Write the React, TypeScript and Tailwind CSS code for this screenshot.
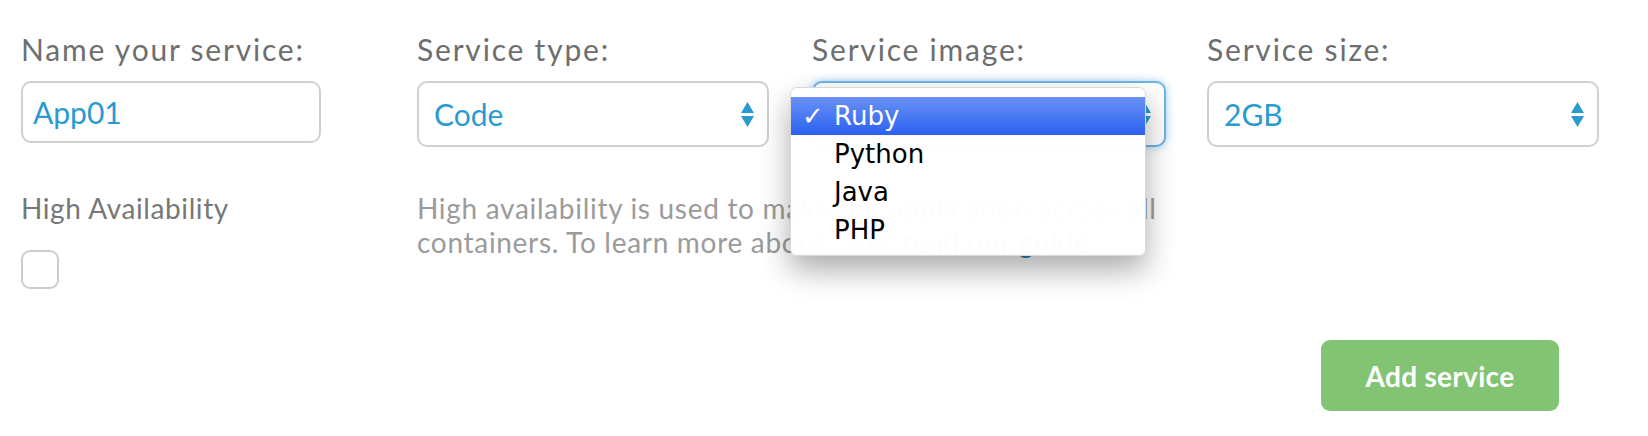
import React from "react";

const Arrows = () => (
  <svg width="13" height="25" viewBox="0 0 13 25" className="shrink-0">
    <polygon points="6.5,0 13,11 0,11" fill="#2a9bd1" />
    <polygon points="0,14 13,14 6.5,25" fill="#2a9bd1" />
  </svg>
);

const Label = ({ children }: { children: React.ReactNode }) => (
  <div className="text-[30px] leading-[36px] tracking-[1.8px] text-[#6e6e6e]">{children}</div>
);

const Select = ({ value, width, focus }: { value: string; width: string; focus?: boolean }) => (
  <div
    className={`mt-[14px] h-[66px] flex items-center justify-between pl-[15px] pr-[13px] rounded-[10px] bg-white ${width} ${
      focus
        ? "border-2 border-[#6db4ea] shadow-[0_0_8px_rgba(90,165,230,0.55)]"
        : "border-2 border-[#d0d0d0]"
    }`}
  >
    <span className="text-[30px] leading-[36px] text-[#2a9bd1]">{value}</span>
    <Arrows />
  </div>
);

export default function App() {
  const items = ["Ruby", "Python", "Java", "PHP"];
  return (
    <div
      className="w-[1648px] h-[436px] bg-white overflow-hidden"
      style={{ fontFamily: "Lato, 'Open Sans', sans-serif" }}
    >
      <div className="flex items-start pl-[21px] pt-[31px]">
        <div className="w-[396px]">
          <Label>Name your service:</Label>
          <div className="mt-[14px] w-[300px] h-[62px] flex items-center pl-[10px] rounded-[10px] border-2 border-[#d0d0d0]">
            <span className="text-[30px] leading-[36px] text-[#2a9bd1]">App01</span>
          </div>
        </div>
        <div className="w-[395px]">
          <Label>Service type:</Label>
          <Select value="Code" width="w-[352px]" />
        </div>
        <div className="w-[395px] relative">
          <Label>Service image:</Label>
          <Select value="Ruby" width="w-[354px]" focus />
          <div
            className="absolute z-10 left-[-22px] top-[56px] w-[356px] h-[169px] pt-[9px] rounded-[7px] bg-white/[0.975] border border-[#d8d8d8] shadow-[0_14px_30px_rgba(0,0,0,0.33)]"
            style={{ fontFamily: "'DejaVu Sans', Verdana, sans-serif" }}
          >
            {items.map((it, i) => (
              <div
                key={it}
                className={`flex h-[38px] items-center text-[26px] leading-[38px] ${
                  i === 0
                    ? "bg-gradient-to-b from-[#6a90f5] to-[#2a60f0] text-white"
                    : "text-black"
                }`}
              >
                <span className="w-[43px] pl-[11px]">{i === 0 ? "✓" : ""}</span>
                <span>{it}</span>
              </div>
            ))}
          </div>
        </div>
        <div>
          <Label>Service size:</Label>
          <Select value="2GB" width="w-[392px]" />
        </div>
      </div>

      <div className="flex items-start pl-[21px] mt-[44px]">
        <div className="w-[396px]">
          <div className="text-[28px] leading-[34px] tracking-[0.6px] text-[#777777]">High Availability</div>
          <div className="mt-[25px] w-[38px] h-[39px] rounded-[9px] border-2 border-[#cdcdcd]" />
        </div>
        <div className="text-[28px] leading-[34px] tracking-[0.7px] text-[#9b9b9b]">
          High availability is used to make the application across all
          <br />
          containers. To learn more about “HA” <span className="text-[#2a80b0]">read our guide.</span>
        </div>
      </div>

      <div className="flex justify-end pr-[89px] mt-[51px]">
        <button className="w-[238px] h-[71px] rounded-[9px] bg-[#82c473] text-white text-[28px] font-bold tracking-[0.3px]">
          Add service
        </button>
      </div>
    </div>
  );
}
